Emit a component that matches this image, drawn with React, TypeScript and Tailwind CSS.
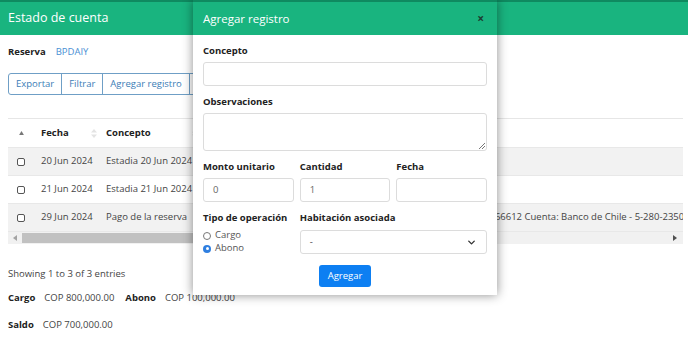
import { ChevronDown } from "lucide-react";

const rows = [
  { fecha: "20 Jun 2024", concepto: "Estadia 20 Jun 2024", extra: "", gray: true },
  { fecha: "21 Jun 2024", concepto: "Estadia 21 Jun 2024", extra: "", gray: false },
  { fecha: "29 Jun 2024", concepto: "Pago de la reserva", extra: "Transferencia 9866612 Cuenta: Banco de Chile - 5-280-23505", gray: true },
];

const SortIcon = () => (
  <svg width="6" height="9" viewBox="0 0 6 9" className="shrink-0">
    <path d="M3 0 L6 3.5 H0 Z" fill="#e3e3e3" />
    <path d="M3 9 L6 5.5 H0 Z" fill="#e3e3e3" />
  </svg>
);

function Page() {
  return (
    <div className="w-[688px] h-[344px] bg-white text-[#444] text-[9.5px]">
      {/* header */}
      <div className="h-[35px] bg-[#19b47f] border-t-2 border-[#0f8a60] flex items-center px-2">
        <span className="text-white text-[12.5px]">Estado de cuenta</span>
      </div>

      <div className="pl-2 pr-[5px]">
        <div className="flex items-center gap-[10px] h-[34px] pt-[1px]">
          <span className="font-bold text-[#222]">Reserva</span>
          <span className="text-[#4a8fd4]">BPDAIY</span>
        </div>

        {/* toolbar */}
        <div className="flex h-[22px] mt-[4px]">
          {["Exportar", "Filtrar", "Agregar registro", "Eliminar"].map((b, i) => (
            <div
              key={b}
              className={`flex items-center px-[7px] border border-[#6f9fc6] text-[#3b7db6] ${i > 0 ? "-ml-px" : "rounded-l-[3px]"}`}
            >
              {b}
            </div>
          ))}
        </div>

        {/* table */}
        <div className="mt-[23px] border-t border-[#e6e6e6] overflow-hidden">
          <div className="w-[900px]">
            <div className="flex items-center h-[28px] font-bold text-[#222]">
              <div className="w-[33px] pl-[11px] flex">
                <svg width="5" height="4" viewBox="0 0 6 5"><path d="M3 0 L6 5 H0 Z" fill="#777" /></svg>
              </div>
              <div className="w-[65px] flex items-center justify-between pr-[9px]">
                <span>Fecha</span>
                <SortIcon />
              </div>
              <div className="w-[92px] flex items-center justify-between">
                <span>Concepto</span>
                <SortIcon />
              </div>
            </div>
            {rows.map((r) => (
              <div
                key={r.fecha}
                className={`flex items-center h-[28px] border-t border-[#e8e8e8] ${r.gray ? "bg-[#f2f2f2]" : "bg-white"}`}
              >
                <div className="w-[33px] pl-[9px] flex">
                  <div className="w-[8px] h-[8px] border border-[#555] rounded-[2px] bg-white" />
                </div>
                <div className="w-[65px] whitespace-nowrap">{r.fecha}</div>
                <div className="w-[315px] whitespace-nowrap">{r.concepto}</div>
                <div className="whitespace-nowrap">{r.extra}</div>
              </div>
            ))}
          </div>
          {/* scrollbar */}
          <div className="relative h-[13px] bg-[#f1f1f1] border-t border-[#e8e8e8]">
            <svg width="4" height="6" viewBox="0 0 4 6" className="absolute left-[5px] top-[3px]"><path d="M4 0 V6 L0 3 Z" fill="#a3a3a3" /></svg>
            <div className="absolute left-[14px] top-[1px] h-[10px] w-[380px] bg-[#c1c1c1]" />
            <svg width="4" height="6" viewBox="0 0 4 6" className="absolute right-[6px] top-[3px]"><path d="M0 0 V6 L4 3 Z" fill="#505050" /></svg>
          </div>
        </div>

        <div className="mt-[23px]">Showing 1 to 3 of 3 entries</div>
        <div className="flex items-center gap-[9px] mt-[10px]">
          <span className="font-bold text-[#222]">Cargo</span>
          <span>COP 800,000.00</span>
          <span className="font-bold text-[#222] ml-[2px]">Abono</span>
          <span>COP 100,000.00</span>
        </div>
        <div className="flex items-center gap-[9px] mt-[12px]">
          <span className="font-bold text-[#222]">Saldo</span>
          <span>COP 700,000.00</span>
        </div>
      </div>
    </div>
  );
}

function Label({ children }: { children: React.ReactNode }) {
  return <div className="font-bold h-[14px] leading-[14px] whitespace-nowrap">{children}</div>;
}

function Field({ label, value }: { label: string; value?: string }) {
  return (
    <div>
      <Label>{label}</Label>
      <div className="mt-[4px] h-[24px] border border-[#dcdcdc] rounded-[3px] flex items-center px-[9px] text-[#666]">
        {value}
      </div>
    </div>
  );
}

function Modal() {
  return (
    <div className="absolute left-[193px] top-0 w-[304px] bg-white shadow-[0_0_10px_rgba(0,0,0,0.45)] text-[9.5px] text-[#222]">
      <div className="h-[35px] bg-[#19b47f] border-t-2 border-[#0f8a60] flex items-center justify-between px-[10px]">
        <span className="text-white text-[11.5px]">Agregar registro</span>
        <span className="text-[#1c3d31] text-[12px] font-bold leading-none pr-[3px]">×</span>
      </div>
      <div className="px-[10px] pt-[9px] pb-[8px]">
        <Field label="Concepto" />
        <div className="mt-[9px]">
          <Label>Observaciones</Label>
          <div className="relative mt-[4px] h-[38px] border border-[#dcdcdc] rounded-[3px]">
            <svg width="6" height="6" viewBox="0 0 6 6" className="absolute right-[1px] bottom-[1px]">
              <path d="M6 0 L0 6 M6 3 L3 6" stroke="#555" strokeWidth="0.8" />
            </svg>
          </div>
        </div>
        <div className="grid grid-cols-3 gap-[6px] mt-[9px]">
          <Field label="Monto unitario" value="0" />
          <Field label="Cantidad" value="1" />
          <Field label="Fecha" />
        </div>
        <div className="grid grid-cols-3 gap-[6px] mt-[9px]">
          <div>
            <Label>Tipo de operación</Label>
            <div className="mt-[4px] flex flex-col text-[#555]">
              <label className="flex items-center gap-[4px] h-[13px]">
                <span className="w-[8px] h-[8px] rounded-full border border-[#777] bg-white" />
                Cargo
              </label>
              <label className="flex items-center gap-[4px] h-[13px]">
                <span className="w-[8px] h-[8px] rounded-full bg-[#2f7fe0] flex items-center justify-center">
                  <span className="w-[3px] h-[3px] rounded-full bg-white" />
                </span>
                Abono
              </label>
            </div>
          </div>
          <div className="col-span-2">
            <Label>Habitación asociada</Label>
            <div className="mt-[5px] h-[24px] border border-[#dcdcdc] rounded-[3px] flex items-center justify-between px-[9px] text-[#444]">
              <span>-</span>
              <ChevronDown className="w-[11px] h-[11px] text-[#333]" strokeWidth={3} />
            </div>
          </div>
        </div>
        <div className="flex justify-center mt-[10px]">
          <div className="h-[22px] px-[9px] flex items-center bg-[#0d7ff2] rounded-[3px] text-white">Agregar</div>
        </div>
      </div>
    </div>
  );
}

export default function App() {
  return (
    <div className="relative w-[688px] h-[344px] overflow-hidden" style={{ fontFamily: '"Open Sans", "Liberation Sans", sans-serif' }}>
      <Page />
      <Modal />
    </div>
  );
}
